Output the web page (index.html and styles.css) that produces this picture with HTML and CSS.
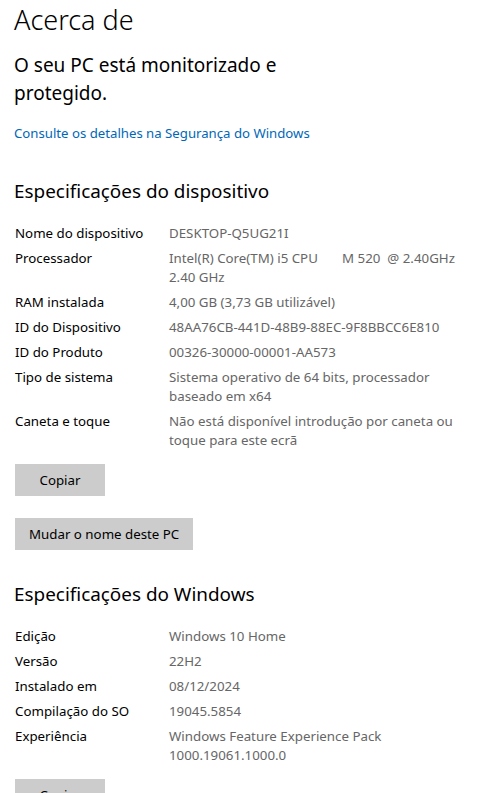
FILE: index.html
```html
<!DOCTYPE html>
<html>
<head>
    <title>Acerca de</title>
    <link rel="stylesheet" href="styles.css">
</head>
<body>
    <div class="page">
        <h1 class="page-title">Acerca de</h1>

        <div class="status">O seu PC está monitorizado e<br>protegido.</div>
        <a class="link" href="#">Consulte os detalhes na Segurança do Windows</a>

        <!-- Device specs -->
        <h2 class="section-title">Especificações do dispositivo</h2>
        <div class="specs">
            <div class="spec-label">Nome do dispositivo</div>
            <div class="spec-value">DESKTOP-Q5UG21I</div>
            <div class="spec-label">Processador</div>
            <div class="spec-value keep-spaces">Intel(R) Core(TM) i5 CPU       M 520  @ 2.40GHz<br>2.40 GHz</div>
            <div class="spec-label">RAM instalada</div>
            <div class="spec-value">4,00 GB (3,73 GB utilizável)</div>
            <div class="spec-label">ID do Dispositivo</div>
            <div class="spec-value">48AA76CB-441D-48B9-88EC-9F8BBCC6E810</div>
            <div class="spec-label">ID do Produto</div>
            <div class="spec-value">00326-30000-00001-AA573</div>
            <div class="spec-label">Tipo de sistema</div>
            <div class="spec-value">Sistema operativo de 64 bits, processador<br>baseado em x64</div>
            <div class="spec-label">Caneta e toque</div>
            <div class="spec-value">Não está disponível introdução por caneta ou<br>toque para este ecrã</div>
        </div>
        <div class="button">Copiar</div>
        <div class="button">Mudar o nome deste PC</div>

        <!-- Windows specs -->
        <h2 class="section-title">Especificações do Windows</h2>
        <div class="specs">
            <div class="spec-label">Edição</div>
            <div class="spec-value">Windows 10 Home</div>
            <div class="spec-label">Versão</div>
            <div class="spec-value">22H2</div>
            <div class="spec-label">Instalado em</div>
            <div class="spec-value">08/12/2024</div>
            <div class="spec-label">Compilação do SO</div>
            <div class="spec-value">19045.5854</div>
            <div class="spec-label">Experiência</div>
            <div class="spec-value">Windows Feature Experience Pack<br>1000.19061.1000.0</div>
        </div>
        <div class="button">Copiar</div>
    </div>
</body>
</html>
```

FILE: styles.css
```css
body {
    margin: 0;
    background-color: #fff;
    font-family: "Noto Sans", "Open Sans", sans-serif;
    color: #000;
}
.page {
    padding: 0 14px;
}
.page-title {
    font-size: 27px;
    font-weight: 300;
    margin: 0;
    padding-top: 1px;
    line-height: 38px;
}
.status {
    font-size: 19px;
    line-height: 28px;
    margin-top: 12px;
}
.link {
    display: inline-block;
    margin-top: 16px;
    font-size: 13.2px;
    color: #0067b8;
    text-decoration: none;
    line-height: 20px;
}
.section-title {
    font-size: 18.9px;
    font-weight: 400;
    margin: 0;
    margin-top: 34px;
    line-height: 28px;
}
.button + .section-title {
    margin-top: 30px;
}
.specs {
    display: grid;
    grid-template-columns: 155px 1fr;
    row-gap: 6px;
    margin-top: 19px;
    font-size: 13.3px;
    line-height: 19px;
}
.spec-label {
    padding-left: 1px;
}
.spec-value {
    color: #666;
}
.keep-spaces {
    white-space: pre;
}
.button {
    display: table;
    margin-left: 1px;
    margin-top: 14px;
    padding: 0 14px;
    min-width: 62px;
    height: 32px;
    line-height: 32px;
    text-align: center;
    background-color: #cccccc;
    font-size: 13.3px;
}
.button + .button {
    margin-top: 22px;
}
```
